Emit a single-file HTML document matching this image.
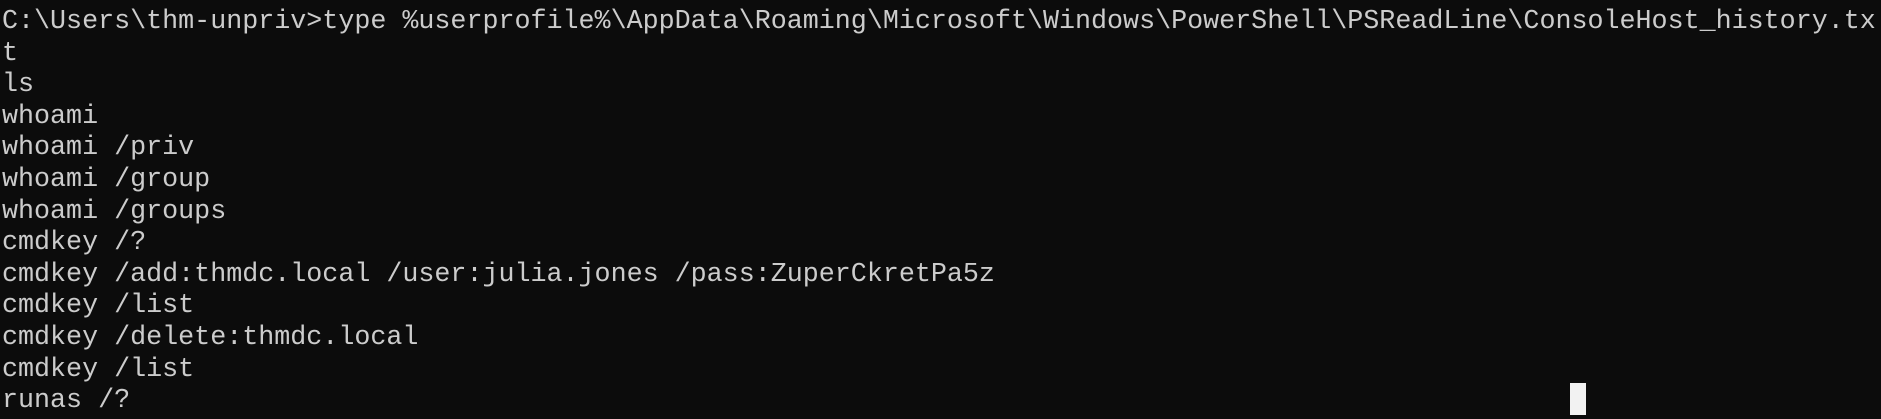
<!DOCTYPE html>
<html><head><meta charset="utf-8"><style>
html,body{margin:0;padding:0;width:1881px;height:419px;overflow:hidden;background:#0c0c0c;}
pre{margin:0;padding:7px 0 0 2px;font-family:"Liberation Mono",monospace;font-size:26.7px;line-height:31.6px;color:#cccccc;white-space:pre;}
#cur{position:absolute;left:1570px;top:383px;width:16px;height:32px;background:#f2f2f2;}
</style></head><body>
<pre>C:\Users\thm-unpriv&gt;type %userprofile%\AppData\Roaming\Microsoft\Windows\PowerShell\PSReadLine\ConsoleHost_history.tx
t
ls
whoami
whoami /priv
whoami /group
whoami /groups
cmdkey /?
cmdkey /add:thmdc.local /user:julia.jones /pass:ZuperCkretPa5z
cmdkey /list
cmdkey /delete:thmdc.local
cmdkey /list
runas /?</pre>
<div id="cur"></div>
</body></html>
